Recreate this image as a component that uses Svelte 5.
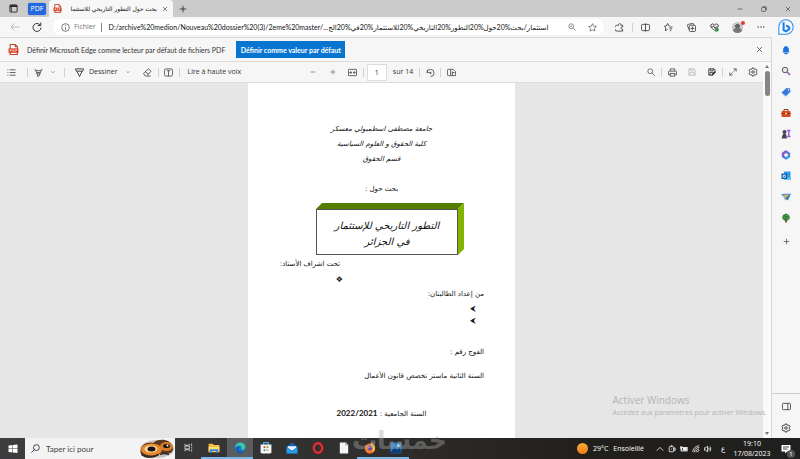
<script>
  const sidebarApps = ['bell', 'searchColor', 'tag', 'toolbox', 'games', 'office', 'outlook', 'plane', 'tree', 'plus'];
  const labels = {
    bell: 'Notifications', searchColor: 'Rechercher', tag: 'Achats', toolbox: 'Outils', games: 'Jeux',
    office: 'Microsoft 365', outlook: 'Outlook', plane: 'Envoyer', tree: 'Arbre', plus: 'Personnaliser'
  };
  const browserActions = ['split', 'favorites', 'collections', 'health'];
  const taskbarApps = [
    { icon: 'folder', name: 'Explorateur', open: true },
    { icon: 'edge', name: 'Edge', open: true, active: true },
    { icon: 'store', name: 'Store' },
    { icon: 'mail', name: 'Courrier' },
    { icon: 'opera', name: 'Opera' },
    { icon: 'file', name: 'Document' },
    { icon: 'firefox', name: 'Firefox', open: true },
    { icon: 'photos', name: 'Photos', open: true }
  ];
  const tray = ['up', 'meet', 'battery', 'wifi', 'sound'];
</script>

{#snippet icon(name, size = 10)}
  <svg class="icon" width={size} height={size} viewBox="0 0 20 20" aria-hidden="true">
    {#if name === 'window'}
      <rect x="2" y="2" width="16" height="16" rx="2" /><path d="M2 4.500h16" stroke-width="4" /><path d="M5 6v11" stroke-width="2" />
    {:else if name === 'pdf'}
      <path d="M4 1h9l4 4v14H4z" fill="#fff" stroke="#b9432e" /><path d="M13 1v4h4" stroke="#b9432e" />
      <rect x="1" y="8" width="18" height="8" fill="#d93a20" stroke="none" />
      <path d="M4 14v-4h2v2H4M9 14v-4h1.500l1 1v2l-1 1zM14 14v-4h3M14 12h2" stroke="#fff" stroke-width="1" />
    {:else if name === 'close'}<path d="M3 3l14 14M17 3L3 17" />
    {:else if name === 'plus'}<path d="M10 2v16M2 10h16" />
    {:else if name === 'minus'}<path d="M2 10h16" />
    {:else if name === 'restore'}<rect x="2" y="5" width="13" height="13" rx="2" /><path d="M6 2h9q3 0 3 3v9" />
    {:else if name === 'back'}<path d="M19 10H2M9 3l-7 7 7 7" />
    {:else if name === 'reload'}<path d="M17 7a8 8 0 1 0 1 4M17.500 1v6h-6" />
    {:else if name === 'info'}<circle cx="10" cy="10" r="8.500" /><path d="M10 9v6M10 5v2" />
    {:else if name === 'zoomout'}<circle cx="8" cy="8" r="6" /><path d="M12.500 12.500L19 19M5 8h6" />
    {:else if name === 'search'}<circle cx="8" cy="8" r="6" /><path d="M12.500 12.500L19 19" />
    {:else if name === 'searchLeft'}<circle cx="12" cy="8" r="6.500" /><path d="M7.500 12.500L1 19" />
    {:else if name === 'star'}<path d="M10 1.500l2.600 5.600 6.100.7-4.500 4.200 1.200 6L10 15l-5.400 3 1.200-6L1.300 7.800l6.100-.7z" />
    {:else if name === 'extension'}<path d="M4 5h4c-1-5 6-5 5 0h4v4c-5-1-5 6 0 5v4H7A6 6 0 0 1 4 5z" />
    {:else if name === 'split'}<rect x="1" y="3" width="18" height="14" rx="3" /><path d="M10 1v18" />
    {:else if name === 'favorites'}<path d="M13 6.500L10.500 6 8 1 5.500 6.500 1 7l3 4-1 6 5-3M12 9h7M12 13h6M13 17h3" />
    {:else if name === 'collections'}<path d="M4 14L1 5q0-2 2-2l10-2q2 0 2 3" /><rect x="5" y="5" width="14" height="14" rx="3" /><path d="M12 8v8M8 12h8" />
    {:else if name === 'health'}<path d="M10 17L2 9q-2-7 4-7 3 0 4 3 1-3 5-3 5 1 3 7l-2 2M2 9h4l2-3 3 6 2-3h4" /><circle cx="15" cy="15" r="4.500" fill="#32954d" stroke="none" />
    {:else if name === 'more'}<g fill="currentColor" stroke="none"><circle cx="3" cy="10" r="1.800" /><circle cx="10" cy="10" r="1.800" /><circle cx="17" cy="10" r="1.800" /></g>
    {:else if name === 'bing'}
      <path d="M1 19V10a9 9 0 1 1 9 9z" fill="#f4faff" stroke="#358be3" stroke-width="1.300" />
      <path d="M7 4v10l3 1.500 4-3c1-2-1-3-4-4" stroke="#1e7fe0" stroke-width="2.600" />
    {:else if name === 'list'}<path d="M6 4h13M6 10h13M6 16h13M1 4h2M1 10h2M1 16h2" />
    {:else if name === 'highlight'}<path d="M2 2l4 8h8l4-8M4 6h12M6 10v3h8v-3M8 13v6l4-2v-4" />
    {:else if name === 'draw'}<path d="M1 2h18l-2 5H3zM4 7l6 12 6-12" />
    {:else if name === 'down'}<path d="M4 7l6 6 6-6" />
    {:else if name === 'up'}<path d="M2 14l8-8 8 8" />
    {:else if name === 'eraser'}<path d="M1 12L12 2l6 5L8 18H5zM5 8l8 6M9 18h8" />
    {:else if name === 'textbox'}<rect x="1" y="2" width="18" height="16" rx="3" /><path d="M6 6h8M10 6v12" />
    {:else if name === 'fit'}<rect x="1" y="3" width="18" height="14" rx="1" /><path d="M4 10h5M11 10h5M7 7l-3 3 3 3M13 7l3 3-3 3" />
    {:else if name === 'rotate'}<path d="M2 11a8 8 0 1 1 8 8M3 4v6h5" /><circle cx="10" cy="11" r="1.500" fill="currentColor" />
    {:else if name === 'pageview'}<path d="M8 17H3q-2 0-2-2V5q0-2 2-2h5zM8 3h6l5 5v9H8M12 8v9M12 10h5" />
    {:else if name === 'print'}<path d="M5 7V2h10v5M5 15H1V9q0-2 2-2h14q2 0 2 2v6h-4" /><rect x="5" y="12" width="10" height="6" />
    {:else if name === 'save'}<path d="M2 2h13l3 3v13H2zM6 2v5h7V2M5 18v-7h10v7" />
    {:else if name === 'saveas'}<path d="M10 18H2V2h13l3 3v4M6 2v5h7V2M5 18v-7h8" /><path d="M10 18l8-9" stroke-width="4" />
    {:else if name === 'expand'}<path d="M11 2h7v7M18 2l-7 7M9 18H2v-7M2 18l7-7" />
    {:else if name === 'gear'}<path d="M8 4l2-3 2 3 5 1 1 2-2 3 2 3-1 2-5 1-2 3-2-3-5-1-1-2 2-3-2-3 1-2z" /><circle cx="10" cy="10" r="2.500" />
    {:else if name === 'panel'}<rect x="1" y="3" width="18" height="14" rx="2" /><path d="M13 3v14" />
    {:else if name === 'bell'}<path d="M3 15c2-3 1-4 1.500-8Q6 2 10 2t5.500 5c.500 4-.500 5 1.500 8z" fill="#1976dc" stroke="none" /><path d="M7 17h6" stroke="#1976dc" stroke-width="3" />
    {:else if name === 'searchColor'}<path d="M12 12l6 6" stroke="#955acb" stroke-width="3.500" /><circle cx="8" cy="8" r="5.500" fill="#e5eaf0" stroke="#5c5964" stroke-width="2" />
    {:else if name === 'tag'}<path d="M11 2l7 1 1 7-9 9-9-8z" fill="#3478d7" stroke="none" /><path d="M3 13l7 5 8-9" stroke="#71b5ff" /><circle cx="15" cy="6" r="1.500" fill="#fff" stroke="none" />
    {:else if name === 'toolbox'}<path d="M6 6V3h8v3" stroke="#923420" stroke-width="2" /><rect x="1" y="6" width="18" height="12" rx="2" fill="#d64b24" stroke="none" /><path d="M1 11h18" stroke="#8e2d17" /><path d="M8 11h4" stroke="#ffcb68" stroke-width="3" />
    {:else if name === 'games'}<path d="M12 3h7M15.500 3v12M12 15h7" stroke="#a35be0" stroke-width="3" /><circle cx="7" cy="6" r="4" fill="#454353" stroke="none" /><path d="M4 10h6l2 9H1z" fill="#454353" stroke="none" />
    {:else if name === 'office'}<path d="M10 3l6 4v6l-6 4-6-4V7z" stroke="#5478de" stroke-width="4.500" /><path d="M10 3L4 7v6" stroke="#8b57ca" stroke-width="4.500" /><path d="M10 17l6-4" stroke="#43a6eb" stroke-width="4.500" />
    {:else if name === 'outlook'}<path d="M6 1h13v17H6z" fill="#299ce5" stroke="none" /><path d="M6 12l6 3 7-4v7H6z" fill="#62c4f5" stroke="none" /><rect x="1" y="5" width="11" height="11" fill="#075daf" stroke="none" /><circle cx="6.500" cy="10.500" r="2.500" stroke="#fff" />
    {:else if name === 'plane'}<path d="M0 4l20-1-6 14-6-4z" fill="#4199cf" stroke="none" /><path d="M8 13l10-9L3 7l4 3v7l4-2" fill="#e0ae64" stroke="none" /><path d="M8 13l11-9-6 12z" fill="#2f83bd" stroke="none" />
    {:else if name === 'tree'}<path d="M10 10v9" stroke="#8d5425" stroke-width="4" /><path d="M10 1l6 3 2 6-4 5H6l-4-5 2-6z" fill="#31833d" stroke="none" /><path d="M5 9h2M11 5h2M13 11h2" stroke="#9bcc42" stroke-width="2" />
    {:else if name === 'start'}<path d="M1 3l8-1v7H1zM10 2l9-1v8h-9zM1 10h8v7l-8-1zM10 10h9v8l-9-1z" fill="#fff" stroke="none" />
    {:else if name === 'taskview'}<path d="M2 2v3h10V2M2 18v-3h10v3M2 7h10v6H2zM17 1v6M17 9v3M17 14v5" stroke-width="1.500" />
    {:else if name === 'folder'}<path d="M1 3h7l2 2h9v12H1z" fill="#f4bd3d" stroke="none" /><path d="M1 8h18v8H1z" fill="#ffdc74" stroke="none" /><path d="M3 18v-6h14v6h-4v-3H7v3z" fill="#388dd4" stroke="none" />
    {:else if name === 'edge'}<circle cx="10" cy="10" r="9" fill="#1974c8" stroke="none" /><path d="M1 9C3-1 18-2 19 8c0 5-5 6-7 4 2-5-3-8-11-3z" fill="#37c8a5" stroke="none" /><path d="M7 10c-2 4 2 8 10 6-4 5-13 3-13-3 0-3 3-5 6-4" fill="#125399" stroke="none" />
    {:else if name === 'store'}<path d="M6 5V1h8v4" stroke="#4aa9e5" stroke-width="2" /><path d="M1 4h18v13l-2 2H3l-2-2z" fill="#f5f5f5" stroke="none" /><path d="M6 7h3v3H6z" fill="#e54d2e" stroke="none" /><path d="M11 7h3v3h-3z" fill="#72b343" stroke="none" /><path d="M6 12h3v3H6z" fill="#269bdc" stroke="none" /><path d="M11 12h3v3h-3z" fill="#edb52f" stroke="none" />
    {:else if name === 'mail'}<path d="M1 8l9-7 9 7v11H1z" fill="#1763ab" stroke="none" /><path d="M3 7h14v7H3z" fill="#eaf5ff" stroke="none" /><path d="M1 8l9 6 9-6v11H1z" fill="#2599e3" stroke="none" />
    {:else if name === 'opera'}<ellipse cx="10" cy="10" rx="7" ry="8" stroke="#e52b2e" stroke-width="4" />
    {:else if name === 'file'}<path d="M3 1h10l4 4v14H3z" fill="#f4f4f4" stroke="none" /><path d="M13 1v4h4" stroke="#aaa" />
    {:else if name === 'firefox'}<circle cx="10" cy="11" r="8.500" fill="#f46a28" stroke="none" /><path d="M12 1c7 4 8 9 5 14-3 2-8 0-7-4z" fill="#ffc12e" stroke="none" /><circle cx="9.500" cy="10.500" r="4.500" fill="#694bc0" stroke="none" /><path d="M2 5l3 1 5 3-4 2c1 4 6 4 9 1-1 8-12 8-13 0z" fill="#fb7a2b" stroke="none" />
    {:else if name === 'photos'}<rect x="1" y="1" width="18" height="18" fill="#2b83d1" stroke="none" /><path d="M1 17l7-9 4 5 3-3 4 5v4H1z" fill="#103e78" stroke="none" /><circle cx="14" cy="6" r="2" fill="#fff" stroke="none" />
    {:else if name === 'meet'}<rect x="3" y="4" width="11" height="13" rx="2" /><path d="M14 9l4-2v7l-4-2M7 1h4M8 10h2" />
    {:else if name === 'battery'}<rect x="3" y="6" width="15" height="9" /><path d="M8 8h8v5H8z" fill="#fff" /><path d="M1 3v5h4V3M3 8v6" />
    {:else if name === 'wifi'}<path d="M2 18C2 9 9 2 18 2M6 18c0-7 5-12 12-12M10 18c0-5 3-8 8-8M14 18q0-4 4-4" />
    {:else if name === 'sound'}<path d="M1 7v6h3l5 4V3L4 7zM12 7q2 3 0 6M15 4q4 6 0 12" />
    {:else if name === 'note'}<path d="M1 2h18v13h-7l-4 4v-4H1z" fill="#fff" stroke="none" /><path d="M4 6h12M4 10h9" stroke="#444" />
    {/if}
  </svg>
{/snippet}

<div class="desktop">
  <header class="titlebar">
    <button class="cell dark" aria-label="Espaces de travail">{@render icon('window', 9)}</button>
    <button class="group">PDF</button>
    <div class="tab">
      {@render icon('pdf', 9)}
      <span class="tab-title" dir="rtl">بحث حول التطور التاريخي للاستثما</span>
      <button class="tab-close" aria-label="Fermer l’onglet">{@render icon('close', 6)}</button>
    </div>
    <button class="cell newtab" aria-label="Nouvel onglet">{@render icon('plus', 8)}</button>
    <div class="window-controls">
      <button aria-label="Réduire">{@render icon('minus', 6)}</button>
      <button aria-label="Restaurer">{@render icon('restore', 6)}</button>
      <button aria-label="Fermer">{@render icon('close', 6)}</button>
    </div>
  </header>

  <nav class="navbar">
    <button class="nav-button faded" aria-label="Précédent">{@render icon('back', 10)}</button>
    <button class="nav-button" aria-label="Actualiser">{@render icon('reload', 10)}</button>
    <div class="address">
      {@render icon('info', 9)}
      <span class="scheme">Fichier</span>
      <i class="rule"></i>
      <a class="url" href="#document"><span>D:/archive%20medion/Nouveau%20dossier%20(3)/2eme%20master/...</span><span dir="rtl">استثمار/بحث%20حول%20التطور%20التاريخي%20للاستثمار%20في%20الج</span></a>
      <button class="cell muted" aria-label="Zoom arrière">{@render icon('zoomout', 8)}</button>
      <button class="cell muted" aria-label="Favori">{@render icon('star', 9)}</button>
    </div>
    <div class="actions">
      <button aria-label="Extensions">{@render icon('extension', 9)}</button>
      <i class="rule light"></i>
      {#each browserActions as name}<button aria-label={name}>{@render icon(name, 9)}</button>{/each}
      <button aria-label="Profil" class="profile"><span class="avatar"></span></button>
      <button aria-label="Menu">{@render icon('more', 8)}</button>
    </div>
    <button class="bing" aria-label="Bing">{@render icon('bing', 16)}</button>
  </nav>

  <div class="body">
    <main>
      <section class="notice">
        {@render icon('pdf', 11)}
        <span>Définir Microsoft Edge comme lecteur par défaut de fichiers PDF</span>
        <button class="primary">Définir comme valeur par défaut</button>
        <button class="dismiss" aria-label="Ignorer">{@render icon('close', 7)}</button>
      </section>
      <div class="reader">
        <div class="reader-main">
          <div class="tools">
            <div class="toolset">
              <button class="cell" aria-label="Sommaire">{@render icon('list', 9)}</button>
              <i class="rule light wide"></i>
              <button class="cell" aria-label="Surligner">{@render icon('highlight', 9)}</button>
              <button class="cell muted small" aria-label="Options de surlignage">{@render icon('down', 6)}</button>
              <i class="rule light wide"></i>
              <button class="draw">{@render icon('draw', 9)}Dessiner</button>
              <button class="cell muted" aria-label="Options de dessin">{@render icon('down', 6)}</button>
              <button class="cell" aria-label="Gomme">{@render icon('eraser', 9)}</button>
              <i class="rule light"></i>
              <button class="cell" aria-label="Ajouter du texte">{@render icon('textbox', 9)}</button>
              <i class="rule light"></i>
              <button class="read">Lire à haute voix</button>
            </div>
            <div class="toolset">
              <button class="cell" aria-label="Zoom arrière">{@render icon('minus', 6)}</button>
              <button class="cell" aria-label="Zoom avant">{@render icon('plus', 6)}</button>
              <button class="cell" aria-label="Ajuster">{@render icon('fit', 9)}</button>
              <i class="rule light"></i>
              <input aria-label="Page" value="1" />
              <span class="count">sur 14</span>
              <i class="rule light"></i>
              <button class="cell" aria-label="Pivoter">{@render icon('rotate', 9)}</button>
              <i class="rule light"></i>
              <button class="cell" aria-label="Affichage de page">{@render icon('pageview', 9)}</button>
            </div>
            <div class="toolset end">
              <button class="cell" aria-label="Rechercher">{@render icon('search', 8)}</button>
              <i class="rule light"></i>
              <button class="cell" aria-label="Imprimer">{@render icon('print', 9)}</button>
              <button class="cell faded" aria-label="Enregistrer">{@render icon('save', 8)}</button>
              <button class="cell dark" aria-label="Enregistrer sous">{@render icon('saveas', 8)}</button>
              <i class="rule light"></i>
              <button class="cell" aria-label="Plein écran">{@render icon('expand', 8)}</button>
              <button class="cell" aria-label="Paramètres">{@render icon('gear', 10)}</button>
            </div>
          </div>
          <div class="viewer">
            <article class="page" id="document" dir="rtl">
              <p class="center slanted">جامعة مصطفى اسطمبولي معسكر</p>
              <p class="center slanted">كلية الحقوق و العلوم السياسية</p>
              <p class="center slanted">قسم الحقوق</p>
              <p class="center subject">بحث حول :</p>
              <div class="box"><h1>التطور التاريخي للإستثمار<br />في الجزائر</h1></div>
              <p class="supervisor">تحت اشراف الأستاذ:</p>
              <p class="supervisor mark">❖</p>
              <p class="students">من إعداد الطالبتان:</p>
              <ul><li>⮜</li><li>⮜</li></ul>
              <p class="cohort">الفوج رقم :</p>
              <p class="program">السنة الثانية ماستر تخصص قانون الأعمال</p>
              <p class="center year">السنة الجامعية : <b>2022/2021</b></p>
            </article>
          </div>
        </div>
        <div class="scrollbar"><i class="arrow"></i><i class="thumb"></i><i class="arrow bottom"></i></div>
      </div>
    </main>
    <aside>
      {#each sidebarApps as name}
        <button class:add={name === 'plus'} aria-label={labels[name]}>{@render icon(name, name === 'plus' ? 7 : 10)}</button>
      {/each}
      <div class="aside-end">
        <button aria-label="Volet">{@render icon('panel', 9)}</button>
        <button aria-label="Paramètres">{@render icon('gear', 10)}</button>
      </div>
    </aside>
    <div class="activation"><strong>Activer Windows</strong><span>Accédez aux paramètres pour activer Windows.</span></div>
  </div>

  <footer class="taskbar">
    <button class="start" aria-label="Démarrer">{@render icon('start', 10)}</button>
    <div class="search">
      {@render icon('searchLeft', 9)}
      <input aria-label="Recherche Windows" placeholder="Taper ici pour" />
      <svg class="art" width="36" height="20" viewBox="0 0 72 40" aria-hidden="true">
        <ellipse cx="36" cy="20" rx="34" ry="18" fill="#9a8d80" opacity=".5" />
        <path d="M3 27C3 11 15 5 28 8c7-7 22-9 32-3 11 7 11 21 0 24-6 2-13 0-17-1-9 11-36 15-40-1z" fill="#5c3820" />
        <ellipse cx="25" cy="21" rx="21" ry="12" fill="#e88a2b" /><ellipse cx="55" cy="15" rx="13" ry="9" fill="#d87c2c" />
        <ellipse cx="24" cy="20" rx="13" ry="7" fill="#f8dba4" /><ellipse cx="25" cy="20" rx="8" ry="5" fill="#17120f" />
        <ellipse cx="55" cy="14" rx="7" ry="4" fill="#1c1512" /><circle cx="57" cy="13" r="2" fill="#fff" />
        <path d="M42 31q8-4 18 0M5 31q18 10 34 0" fill="none" stroke="#312a27" stroke-width="3" />
      </svg>
    </div>
    <button class="task" aria-label="Vue des tâches">{@render icon('taskview', 9)}</button>
    {#each taskbarApps as app}
      <button class="task" class:open={app.open} class:active={app.active} aria-label={app.name}>{@render icon(app.icon, 12)}</button>
    {/each}
    <div class="tray">
      <button class="weather"><i class="sun"></i><span>29°C</span><span>Ensoleillé</span></button>
      {#each tray as name}<button class="tray-icon" aria-label={name}>{@render icon(name, 8)}</button>{/each}
      <button class="lang">ع</button>
      <button class="clock"><time>19:10</time><time>17/08/2023</time></button>
      <button class="alerts" aria-label="Centre de notifications">{@render icon('note', 10)}<span>1</span></button>
    </div>
  </footer>
  <div class="watermark" dir="rtl">خمسات</div>
</div>

<style>
  :global(body) { margin: 0; }
  .desktop { position: relative; display: flex; flex-direction: column; height: 100vh; overflow: hidden; background: #f6f6f6; color: #333; font: 7px/10px "Open Sans", "Noto Sans", "DejaVu Sans", sans-serif; }
  .desktop * { box-sizing: border-box; }
  button { display: flex; align-items: center; justify-content: center; border: 0; padding: 0; background: none; color: inherit; font: inherit; white-space: nowrap; }
  .icon { display: block; flex: none; fill: none; stroke: currentColor; stroke-width: 2; }
  .cell { flex: none; width: 20px; color: #555; }
  .cell.small { width: 10px; }
  .cell.muted { color: #777; }
  .cell.dark { color: #222; }
  .faded, .cell.faded { color: #bbb; }
  .rule { flex: none; width: 1px; height: 9px; background: #888; }
  .rule.light { background: #d2d2d2; }

  .titlebar { display: flex; flex: none; align-items: center; height: 17px; background: #cbcbcb; padding-left: 3px; }
  .group { width: 18px; height: 12px; margin: 0 3px 0 5px; border-radius: 2px; background: #2468dc; color: #fff; box-shadow: 0 0 1px #2468dc; }
  .tab { display: flex; align-items: center; width: 124px; height: 17px; padding-left: 4px; border-radius: 4px 4px 0 0; background: #f7f7f7; }
  .tab-title { flex: 1; margin-left: 6px; white-space: nowrap; color: #111; font: 6px/16px "DejaVu Sans", sans-serif; }
  .tab-close { width: 16px; }
  .newtab { color: #222; }
  .window-controls { display: flex; margin-left: auto; }
  .window-controls button { width: 24px; }

  .navbar { display: flex; flex: none; align-items: center; height: 20px; padding-left: 4px; }
  .nav-button { width: 22px; }
  .address { display: flex; flex: 1; align-items: center; min-width: 0; height: 16px; margin-left: 5px; padding: 0 2px 0 8px; border-radius: 8px; background: #fff; color: #666; }
  .scheme { margin: 0 5px 0 4px; color: #777; }
  .url { display: flex; flex: 1; min-width: 0; margin-left: 7px; white-space: nowrap; color: #111; text-decoration: none; font: 7px/14px Lato, "DejaVu Sans", sans-serif; }
  .actions { display: flex; align-items: center; margin-left: 4px; }
  .actions .rule { margin: 0 1px; }
  .actions button { width: 23px; color: #444; }
  .avatar { position: relative; width: 11px; height: 11px; border-radius: 50%; background: radial-gradient(circle at 50% 38%, #666 0 25%, transparent 28%), radial-gradient(circle at 50% 95%, #777 0 40%, #c5c5c5 43%); }
  .avatar::after { content: ""; position: absolute; top: -1px; right: -2px; width: 4px; height: 4px; border-radius: 50%; background: #e03a2d; }
  .bing { width: 28px; }

  .body { position: relative; display: flex; flex: 1; min-height: 0; }
  main { display: flex; flex: 1; flex-direction: column; min-width: 0; border: solid #d8d8d8; border-width: 1px 1px 0 0; }
  .notice { display: flex; flex: none; align-items: center; height: 24px; padding-left: 8px; border-bottom: 1px solid #dcdcdc; font-family: Lato, sans-serif; }
  .notice span { margin: 0 11px 0 8px; }
  .primary { width: 109px; height: 17px; background: #0875d1; color: #fff; font-weight: 700; }
  .dismiss { width: 24px; margin-left: auto; }
  .reader { display: flex; flex: 1; min-height: 0; }
  .reader-main { display: flex; flex: 1; flex-direction: column; min-width: 0; }
  .tools { display: grid; flex: none; grid-template-columns: 1fr auto 1fr; align-items: center; height: 21px; padding-left: 1px; border-bottom: 1px solid #ddd; }
  .toolset { display: flex; align-items: center; }
  .toolset.end { justify-content: flex-end; }
  .rule.wide { margin-left: 6px; }
  .draw { gap: 5px; margin-left: 10px; }
  .read { margin-left: 8px; }
  .tools input { width: 20px; height: 17px; margin-left: 3px; border: 1px solid #ddd; padding: 0; background: #fff; color: #333; font: inherit; text-align: center; }
  .count { margin: 0 6px; }
  .viewer { display: flex; flex: 1; justify-content: center; min-height: 0; background: #e6e6e6; }
  .scrollbar { display: flex; flex: none; flex-direction: column; align-items: center; width: 8px; padding: 3px 0; background: #fafafa; }
  .arrow { border: solid transparent; border-width: 0 2px 3px; border-bottom-color: #777; }
  .thumb { width: 5px; height: 25px; margin-top: 3px; border-radius: 3px; background: #858585; }
  .arrow.bottom { margin-top: auto; transform: rotate(180deg); }

  .page { width: 267px; padding: 39px 31px 0; overflow: hidden; background: #fff; color: #111; font: 7px/15px "DejaVu Sans", sans-serif; }
  .page p, .page h1, .page ul { margin: 0; padding: 0; list-style: none; white-space: nowrap; }
  .center { text-align: center; }
  .slanted { font-style: italic; }
  .page .subject { margin-top: 15px; }
  .box { position: relative; width: 148px; height: 52px; margin: 6px 20px 2px 0; padding: 6px 6px 0 0; }
  .box::before, .box::after { content: ""; position: absolute; inset: 0; }
  .box::before { background: #547e00; clip-path: polygon(0 6px, 6px 0, 100% 0, calc(100% - 6px) 6px); }
  .box::after { background: #82b500; clip-path: polygon(calc(100% - 6px) 6px, 100% 0, 100% calc(100% - 6px), calc(100% - 6px) 100%); }
  .box h1 { height: 46px; padding-top: 8px; border: 1px solid #555; text-align: center; font: italic 10px/16px "DejaVu Sans", sans-serif; }
  .page .supervisor { margin-right: 144px; }
  .page .mark { margin-right: 141px; font-size: 8px; }
  .page ul { margin: 1px 8px 0 0; font-size: 8px; line-height: 12px; }
  .page .cohort { margin-top: 18px; }
  .page .program { margin-top: 9px; }
  .page .year { margin-top: 23px; }
  .year b { font: 700 8px/10px Lato, sans-serif; }

  aside { display: flex; flex: none; flex-direction: column; align-items: center; width: 28px; padding-top: 2px; color: #444; }
  aside button { width: 28px; height: 21px; flex: none; }
  aside .add { margin-top: 3px; }
  .aside-end { margin-top: auto; padding-top: 2px; border-top: 1px solid #ccc; }
  .activation { position: absolute; right: 33px; bottom: 20px; display: flex; flex-direction: column; color: #b4b4b4; pointer-events: none; }
  .activation strong { font-size: 10px; font-weight: 400; line-height: 16px; }

  .taskbar { display: flex; flex: none; height: 21px; background: linear-gradient(90deg, #3d3d3f, #302f2e 45%, #211f1c 75%, #202020); color: #fff; }
  .start { width: 25px; }
  .search { display: flex; align-items: center; width: 150px; padding-left: 6px; background: #f3f3f3; color: #333; }
  .search input { flex: 1; min-width: 0; border: 0; padding: 0; margin-left: 6px; background: none; color: #444; font: 8px/12px Lato, sans-serif; }
  .search input::placeholder { color: #444; opacity: 1; }
  .task { width: 26px; border-bottom: 2px solid transparent; }
  .task.open { border-color: #76b9ed; }
  .task.active { background: #5a5d60; }
  .tray { display: flex; align-items: center; margin-left: auto; }
  .weather { gap: 5px; margin-right: 10px; }
  .sun { width: 11px; height: 11px; border-radius: 50%; background: linear-gradient(#f8ae35, #ef7e18); }
  .tray-icon { width: 12px; }
  .lang { width: 18px; }
  .clock { flex-direction: column; width: 40px; }
  .alerts { position: relative; width: 28px; }
  .alerts span { position: absolute; right: 5px; bottom: -4px; width: 8px; height: 8px; border-radius: 50%; background: #555; font-size: 6px; line-height: 8px; text-align: center; }
  .watermark { position: absolute; left: 44%; bottom: 3px; color: #aaa; opacity: .4; font: bold 25px/30px "DejaVu Sans", sans-serif; pointer-events: none; }
</style>
